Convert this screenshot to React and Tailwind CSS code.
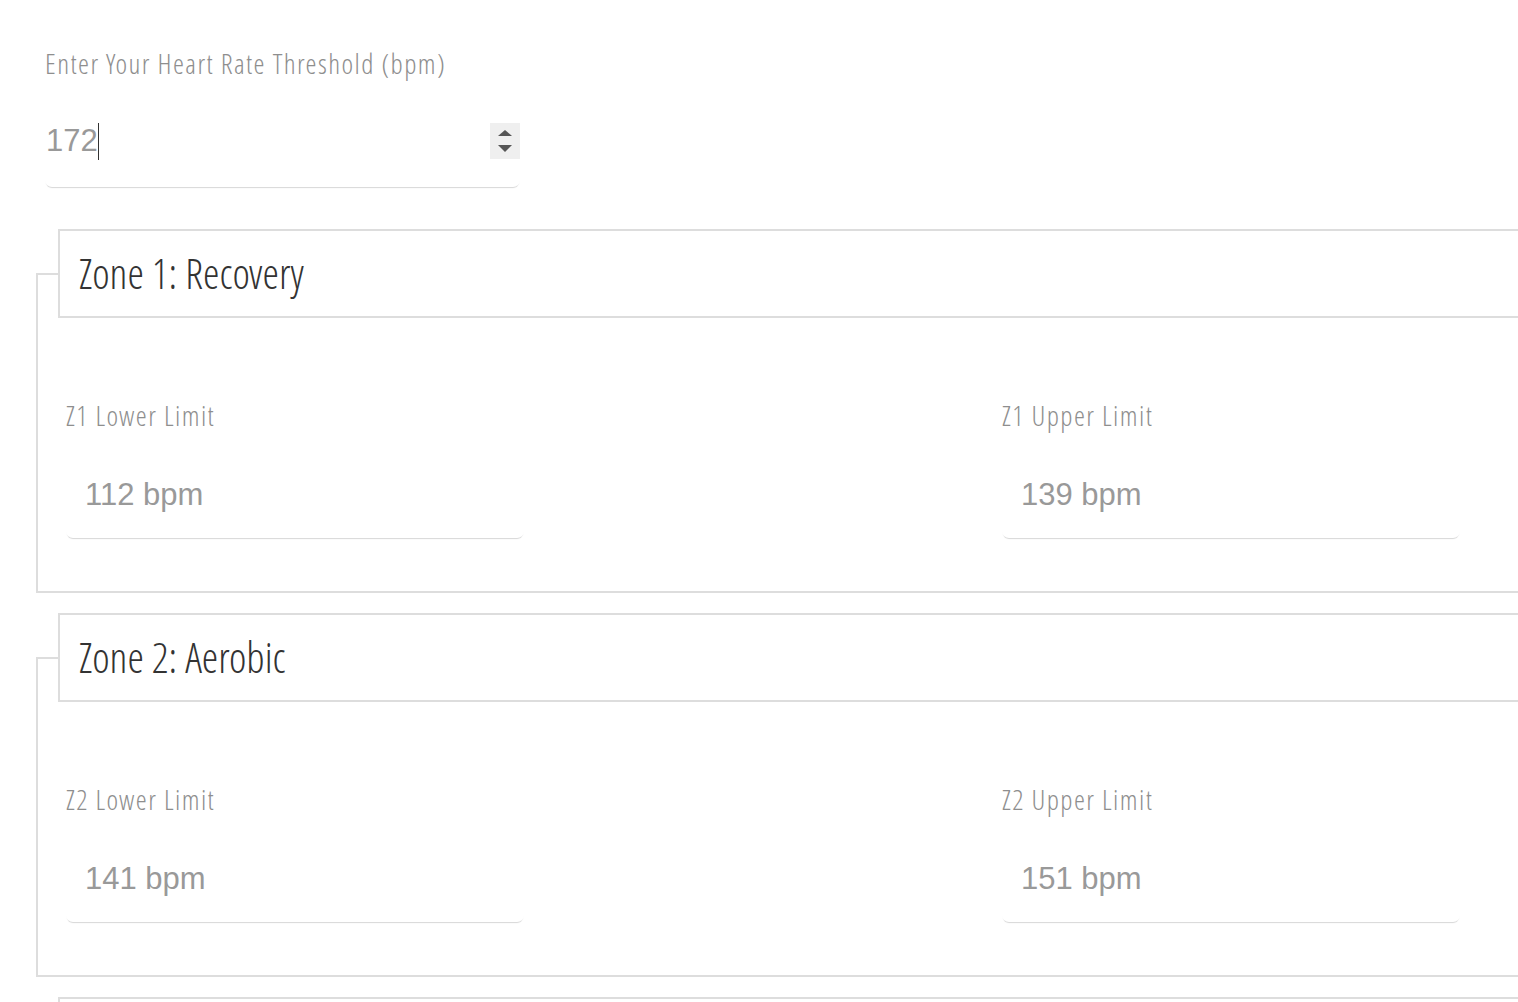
import React from "react";

const cond = "font-['Open_Sans_Condensed_Light','Open_Sans_Condensed','Open_Sans',sans-serif] font-light font-stretch-condensed";

function Spinner() {
  return (
    <div className="w-[30px] h-[36px] bg-[#efefef] flex flex-col items-center justify-center gap-[9px]">
      <svg width="14" height="6" viewBox="0 0 14 6"><polygon points="7,0 14,6 0,6" fill="#555" /></svg>
      <svg width="14" height="7" viewBox="0 0 14 7"><polygon points="0,0 14,0 7,7" fill="#555" /></svg>
    </div>
  );
}

function Field({ label, value }) {
  return (
    <div className="flex flex-col">
      <div className={`${cond} text-[28px] tracking-[1.4px] leading-[40px] text-[#8e8e8e]`}>{label}</div>
      <div className="mt-[15px] w-[458px] h-[88px] rounded-[7px] bg-white shadow-[0_2px_1px_-1px_rgba(0,0,0,0.16)] flex items-center pl-[19px] pt-[2px] font-['Liberation_Sans',Arial,sans-serif] text-[31px] text-[#999]">
        {value}
      </div>
    </div>
  );
}

function Zone({ title, n, lower, upper }) {
  return (
    <fieldset className="w-[1600px] border-2 border-[#ddd] pl-[20px] pt-[77px] pb-[53px]">
      <legend className={`w-[1500px] h-[89px] border-2 border-[#ddd] bg-white pl-[19px] ${cond} text-[42px] leading-[83px] text-[#333]`}>
        {title}
      </legend>
      {n ? (
        <div className="grid grid-cols-[936px_458px] pl-[8px]">
          <Field label={`Z${n} Lower Limit`} value={lower} />
          <Field label={`Z${n} Upper Limit`} value={upper} />
        </div>
      ) : null}
    </fieldset>
  );
}

export default function App() {
  return (
    <div className="w-[1518px] h-[1002px] overflow-hidden bg-white">
      <div className="pl-[45px] pt-[43px]">
        <div className={`${cond} text-[28px] tracking-[1.4px] leading-[40px] text-[#8e8e8e]`}>Enter Your Heart Rate Threshold (bpm)</div>
        <div className="mt-[11px] w-[475px] h-[93px] rounded-[7px] bg-white shadow-[0_2px_1px_-1px_rgba(0,0,0,0.16)] flex items-center justify-between">
          <div className="flex items-center pl-[1px] pt-[2px] font-['Liberation_Sans',Arial,sans-serif] text-[31px] text-[#999]">
            <span>172</span>
            <span className="w-px h-[37px] bg-[#333]" />
          </div>
          <Spinner />
        </div>
      </div>
      <div className="pl-[36px] mt-[42px] flex flex-col gap-[20px]">
        <Zone title="Zone 1: Recovery" n={1} lower="112 bpm" upper="139 bpm" />
        <Zone title="Zone 2: Aerobic" n={2} lower="141 bpm" upper="151 bpm" />
        <Zone title="" n={0} />
      </div>
    </div>
  );
}
